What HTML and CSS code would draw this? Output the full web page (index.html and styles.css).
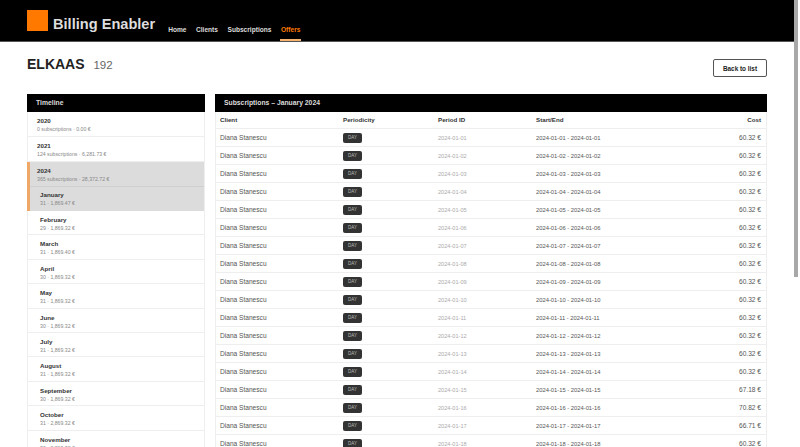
FILE: index.html
```html
<!DOCTYPE html>
<html lang="en">
<head>
<meta charset="utf-8">
<title>Billing Enabler</title>
<link rel="stylesheet" href="styles.css">
</head>
<body>
<div class="app">
<header class="topbar">
  <div class="logo"></div>
  <span class="brand">Billing Enabler</span>
  <nav class="nav">
    <a>Home</a><a>Clients</a><a>Subscriptions</a><a class="active">Offers</a>
  </nav>
</header>
<main class="page">
  <div class="title-row">
    <h1>ELKAAS <span class="id">192</span></h1>
    <a class="back">Back to list</a>
  </div>
  <div class="columns">
    <section class="panel timeline">
      <h2>Timeline</h2>
      <div class="year"><b>2020</b><small>0 subscriptions · 0.00 €</small></div>
      <div class="year"><b>2021</b><small>124 subscriptions · 6,281.73 €</small></div>
      <div class="selected">
        <div class="year"><b>2024</b><small>365 subscriptions · 28,372.72 €</small></div>
        <div class="month"><b>January</b><small>31 · 1,869.47 €</small></div>
      </div>
      <div class="month"><b>February</b><small>29 · 1,869.32 €</small></div>
      <div class="month"><b>March</b><small>31 · 1,869.40 €</small></div>
      <div class="month"><b>April</b><small>30 · 1,869.32 €</small></div>
      <div class="month"><b>May</b><small>31 · 1,869.32 €</small></div>
      <div class="month"><b>June</b><small>30 · 1,869.32 €</small></div>
      <div class="month"><b>July</b><small>31 · 1,869.32 €</small></div>
      <div class="month"><b>August</b><small>31 · 1,869.32 €</small></div>
      <div class="month"><b>September</b><small>30 · 1,869.32 €</small></div>
      <div class="month"><b>October</b><small>31 · 2,869.32 €</small></div>
      <div class="month"><b>November</b><small>30 · 2,869.32 €</small></div>
    </section>
    <section class="panel subs">
      <h2>Subscriptions – January 2024</h2>
      <table>
        <thead><tr><th>Client</th><th>Periodicity</th><th>Period ID</th><th>Start/End</th><th class="num">Cost</th></tr></thead>
        <tbody>
          <tr><td>Diana Stanescu</td><td><span class="tag">DAY</span></td><td class="pid">2024-01-01</td><td class="dates">2024-01-01 - 2024-01-01</td><td class="num">60.32 €</td></tr>
          <tr><td>Diana Stanescu</td><td><span class="tag">DAY</span></td><td class="pid">2024-01-02</td><td class="dates">2024-01-02 - 2024-01-02</td><td class="num">60.32 €</td></tr>
          <tr><td>Diana Stanescu</td><td><span class="tag">DAY</span></td><td class="pid">2024-01-03</td><td class="dates">2024-01-03 - 2024-01-03</td><td class="num">60.32 €</td></tr>
          <tr><td>Diana Stanescu</td><td><span class="tag">DAY</span></td><td class="pid">2024-01-04</td><td class="dates">2024-01-04 - 2024-01-04</td><td class="num">60.32 €</td></tr>
          <tr><td>Diana Stanescu</td><td><span class="tag">DAY</span></td><td class="pid">2024-01-05</td><td class="dates">2024-01-05 - 2024-01-05</td><td class="num">60.32 €</td></tr>
          <tr><td>Diana Stanescu</td><td><span class="tag">DAY</span></td><td class="pid">2024-01-06</td><td class="dates">2024-01-06 - 2024-01-06</td><td class="num">60.32 €</td></tr>
          <tr><td>Diana Stanescu</td><td><span class="tag">DAY</span></td><td class="pid">2024-01-07</td><td class="dates">2024-01-07 - 2024-01-07</td><td class="num">60.32 €</td></tr>
          <tr><td>Diana Stanescu</td><td><span class="tag">DAY</span></td><td class="pid">2024-01-08</td><td class="dates">2024-01-08 - 2024-01-08</td><td class="num">60.32 €</td></tr>
          <tr><td>Diana Stanescu</td><td><span class="tag">DAY</span></td><td class="pid">2024-01-09</td><td class="dates">2024-01-09 - 2024-01-09</td><td class="num">60.32 €</td></tr>
          <tr><td>Diana Stanescu</td><td><span class="tag">DAY</span></td><td class="pid">2024-01-10</td><td class="dates">2024-01-10 - 2024-01-10</td><td class="num">60.32 €</td></tr>
          <tr><td>Diana Stanescu</td><td><span class="tag">DAY</span></td><td class="pid">2024-01-11</td><td class="dates">2024-01-11 - 2024-01-11</td><td class="num">60.32 €</td></tr>
          <tr><td>Diana Stanescu</td><td><span class="tag">DAY</span></td><td class="pid">2024-01-12</td><td class="dates">2024-01-12 - 2024-01-12</td><td class="num">60.32 €</td></tr>
          <tr><td>Diana Stanescu</td><td><span class="tag">DAY</span></td><td class="pid">2024-01-13</td><td class="dates">2024-01-13 - 2024-01-13</td><td class="num">60.32 €</td></tr>
          <tr><td>Diana Stanescu</td><td><span class="tag">DAY</span></td><td class="pid">2024-01-14</td><td class="dates">2024-01-14 - 2024-01-14</td><td class="num">60.32 €</td></tr>
          <tr><td>Diana Stanescu</td><td><span class="tag">DAY</span></td><td class="pid">2024-01-15</td><td class="dates">2024-01-15 - 2024-01-15</td><td class="num">67.18 €</td></tr>
          <tr><td>Diana Stanescu</td><td><span class="tag">DAY</span></td><td class="pid">2024-01-16</td><td class="dates">2024-01-16 - 2024-01-16</td><td class="num">70.82 €</td></tr>
          <tr><td>Diana Stanescu</td><td><span class="tag">DAY</span></td><td class="pid">2024-01-17</td><td class="dates">2024-01-17 - 2024-01-17</td><td class="num">66.71 €</td></tr>
          <tr><td>Diana Stanescu</td><td><span class="tag">DAY</span></td><td class="pid">2024-01-18</td><td class="dates">2024-01-18 - 2024-01-18</td><td class="num">60.32 €</td></tr>
        </tbody>
      </table>
    </section>
  </div>
</main>
</div>
<div class="scroll-thumb"></div>
</body>
</html>
```
FILE: styles.css
```css
* { box-sizing: border-box; }
html { margin: 0; height: 447px; overflow: hidden; }
body {
  margin: 0;
  height: 447px;
  overflow: hidden;
  position: relative;
  padding-right: 6px;
  font-family: "Liberation Sans", Arial, sans-serif;
  background: #fff;
  color: #333;
}
.scroll-thumb {
  position: absolute;
  top: 0;
  right: 2px;
  width: 4px;
  height: 277px;
  background: #a8a8a8;
}
.app { height: 447px; overflow: hidden; }
.topbar {
  height: 42px;
  background: #000;
  border-bottom: 1px solid #555;
  padding-left: 27px;
  display: flex;
  align-items: flex-start;
}
.logo { width: 21px; height: 21px; margin-top: 10px; background: #ff7900; }
.brand { margin: 14px 0 0 5px; color: #ddd; font-size: 14.6px; line-height: 20px; font-weight: 700; }
.nav { display: flex; gap: 7.5px; margin-left: 12px; height: 41px; }
.nav a {
  color: #ddd; font-size: 6.6px; font-weight: 700;
  padding: 25px 1px 0; line-height: 9px;
  border-bottom: 2px solid transparent;
}
.nav a.active { color: #ff7900; border-bottom-color: #f5b26f; }
.page { padding: 0 27px; }
.title-row { display: flex; justify-content: space-between; align-items: flex-start; height: 52px; }
h1 { margin: 13px 0 0; font-size: 14px; line-height: 18px; font-weight: 700; color: #222; }
.id { margin-left: 5px; font-size: 11.5px; font-weight: 400; color: #666; }
.back {
  margin-top: 17px; width: 54px; height: 18px;
  border: 1.5px solid #555; border-radius: 2px;
  font-size: 6.4px; font-weight: 700; color: #222;
  display: flex; align-items: center; justify-content: center;
}
.columns { display: flex; gap: 10px; align-items: flex-start; }
.panel { border: 1px solid #eee; border-top: 0; }
.timeline { width: 178px; flex: none; }
.subs { flex: 1; min-width: 0; }
h2 {
  margin: 0 -1px; height: 18px; background: #000; color: #ddd;
  font-size: 6.8px; line-height: 18px; font-weight: 700; padding: 0 9px;
}
.year, .month { border-bottom: 1px solid #eee; display: flex; flex-direction: column; }
.year { padding: 5px 9px 0; height: 25px; }
.month { padding: 5px 12px 0; height: 24.4px; }
.year b, .month b { font-size: 6.2px; line-height: 8px; color: #333; }
.year small, .month small { font-size: 5.2px; line-height: 8px; color: #888; }
.selected { background: #dcdcdc; margin-left: -1px; border-left: 3px solid #f0a868; }
.selected .year { padding-left: 7px; }
.selected .month { padding-left: 10px; border-bottom: 0; height: 24px; padding-top: 4px; }
.selected > div { border-bottom-color: #d0d0d0; }
table { width: 100%; border-collapse: collapse; table-layout: fixed; font-size: 6.6px; }
th { text-align: left; font-size: 6.2px; font-weight: 700; color: #333; height: 16px; padding: 0 4px; }
td { height: 18px; padding: 1px 4px 0; color: #555; border-top: 1px solid #eee; }
th:nth-child(1) { width: 123px; }
th:nth-child(2) { width: 95px; }
th:nth-child(3) { width: 98px; }
th:nth-child(5) { padding-right: 5px; }
td.num { padding-right: 5px; }
.num { text-align: right; }
.pid { color: #aaa; font-size: 5.6px; }
.dates { font-size: 5.8px; }
.tag {
  display: inline-block; width: 19px; height: 10px; line-height: 10px;
  background: #333; color: #bbb; border-radius: 2px;
  font-size: 4.5px; text-align: center; vertical-align: middle;
}
```
